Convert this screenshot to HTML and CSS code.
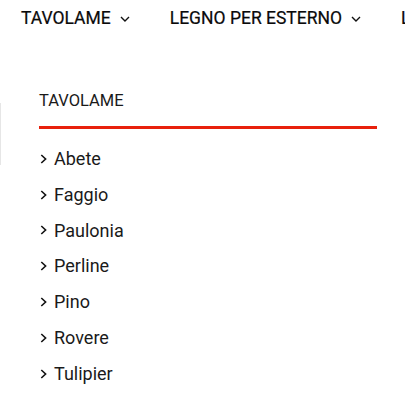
FILE: index.html
```html
<!DOCTYPE html>
<html lang="it">
<head>
<meta charset="utf-8">
<title>Tavolame</title>
<link rel="stylesheet" href="styles.css">
</head>
<body>
<div class="page">
  <div class="edge"></div>
  <nav class="nav">
    <a class="nav-item">TAVOLAME
      <svg class="caret" width="10" height="6" viewBox="0 0 10 6"><path d="M1 1 L5 5 L9 1" fill="none" stroke="#111" stroke-width="1.4"/></svg>
    </a>
    <a class="nav-item">LEGNO PER ESTERNO
      <svg class="caret" width="10" height="6" viewBox="0 0 10 6"><path d="M1 1 L5 5 L9 1" fill="none" stroke="#111" stroke-width="1.4"/></svg>
    </a>
    <a class="nav-item">LISTELLI</a>
  </nav>
  <div class="panel">
    <h3 class="panel-title">TAVOLAME</h3>
    <ul class="menu">
      <li><svg class="arrow" width="7" height="10" viewBox="0 0 7 10"><path d="M1.3 1 L5.6 5 L1.3 9" fill="none" stroke="#111" stroke-width="1.6"/></svg>Abete</li>
      <li><svg class="arrow" width="7" height="10" viewBox="0 0 7 10"><path d="M1.3 1 L5.6 5 L1.3 9" fill="none" stroke="#111" stroke-width="1.6"/></svg>Faggio</li>
      <li><svg class="arrow" width="7" height="10" viewBox="0 0 7 10"><path d="M1.3 1 L5.6 5 L1.3 9" fill="none" stroke="#111" stroke-width="1.6"/></svg>Paulonia</li>
      <li><svg class="arrow" width="7" height="10" viewBox="0 0 7 10"><path d="M1.3 1 L5.6 5 L1.3 9" fill="none" stroke="#111" stroke-width="1.6"/></svg>Perline</li>
      <li><svg class="arrow" width="7" height="10" viewBox="0 0 7 10"><path d="M1.3 1 L5.6 5 L1.3 9" fill="none" stroke="#111" stroke-width="1.6"/></svg>Pino</li>
      <li><svg class="arrow" width="7" height="10" viewBox="0 0 7 10"><path d="M1.3 1 L5.6 5 L1.3 9" fill="none" stroke="#111" stroke-width="1.6"/></svg>Rovere</li>
      <li><svg class="arrow" width="7" height="10" viewBox="0 0 7 10"><path d="M1.3 1 L5.6 5 L1.3 9" fill="none" stroke="#111" stroke-width="1.6"/></svg>Tulipier</li>
    </ul>
  </div>
</div>
</body>
</html>
```
FILE: styles.css
```css
* { box-sizing: border-box; }
html, body { margin: 0; padding: 0; background: #fff; }
body {
  font-family: Roboto, "Noto Sans", sans-serif;
  color: #111;
  width: 405px;
  height: 414px;
  overflow: hidden;
}
.page { position: relative; height: 414px; overflow: hidden; }
.edge {
  position: absolute;
  left: 0;
  top: 103px;
  width: 1px;
  height: 62px;
  background: #e6e6e6;
}
.nav {
  display: flex;
  align-items: center;
  height: 36px;
  padding-left: 21px;
  gap: 40px;
  white-space: nowrap;
}
.nav-item {
  display: flex;
  align-items: center;
  gap: 9px;
  font-size: 17.5px;
  font-weight: 400;
  color: #0a0a0a;
  flex-shrink: 0;
  -webkit-text-stroke: 0.2px #0a0a0a;
}
.caret { display: block; margin-top: 1px; }
.panel {
  margin-left: 39px;
  width: 338px;
  padding-top: 52px;
}
.panel-title {
  margin: 0;
  font-size: 16.5px;
  font-weight: 400;
  line-height: 25px;
  padding-bottom: 13px;
  border-bottom: 3px solid #e8200c;
  color: #1a1a1a;
}
.menu {
  list-style: none;
  margin: 12px 0 0;
  padding: 0;
}
.menu li {
  display: flex;
  align-items: center;
  gap: 7px;
  font-size: 18px;
  font-weight: 400;
  line-height: 35.8px;
  padding-left: 1px;
  color: #1a1a1a;
}
.arrow { display: block; }
```
